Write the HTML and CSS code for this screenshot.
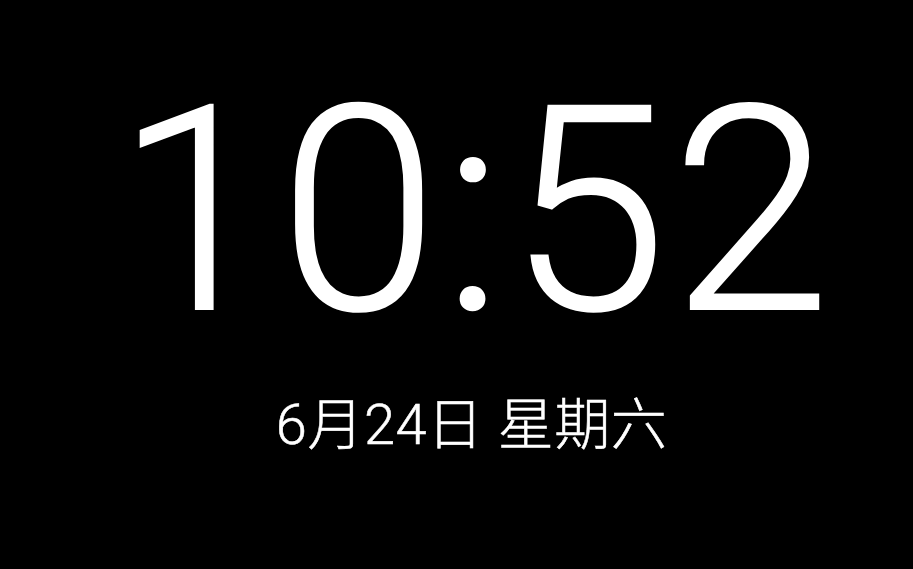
FILE: index.html
```html
<!DOCTYPE html>
<html lang="zh-CN">
<head>
<meta charset="utf-8">
<title>Clock</title>
<link rel="stylesheet" href="styles.css">
</head>
<body>
<main class="screen">
  <div class="clock">
    <div class="time">10:52</div>
    <div class="date">6月24日 星期六</div>
  </div>
</main>
</body>
</html>
```
FILE: styles.css
```css
html, body {
  margin: 0;
  padding: 0;
  background: #000;
}
.screen {
  height: 569px;
  width: 913px;
  display: flex;
  justify-content: center;
  background: #000;
  color: #fff;
  overflow: hidden;
}
.clock {
  display: flex;
  flex-direction: column;
  align-items: center;
  padding-top: 69px;
  padding-left: 30px;
}
.time {
  font-family: Roboto, "Liberation Sans", sans-serif;
  font-weight: 300;
  font-size: 286px;
  line-height: 1;
  letter-spacing: 5px;
  margin-left: 8px;
  -webkit-text-stroke: 2px #fff;
}
.date {
  font-family: Roboto, "Noto Sans CJK SC", sans-serif;
  font-weight: 300;
  font-size: 56px;
  line-height: 1;
  letter-spacing: 0.5px;
  margin-top: 42px;
  -webkit-text-stroke: 0.5px #fff;
}
```
